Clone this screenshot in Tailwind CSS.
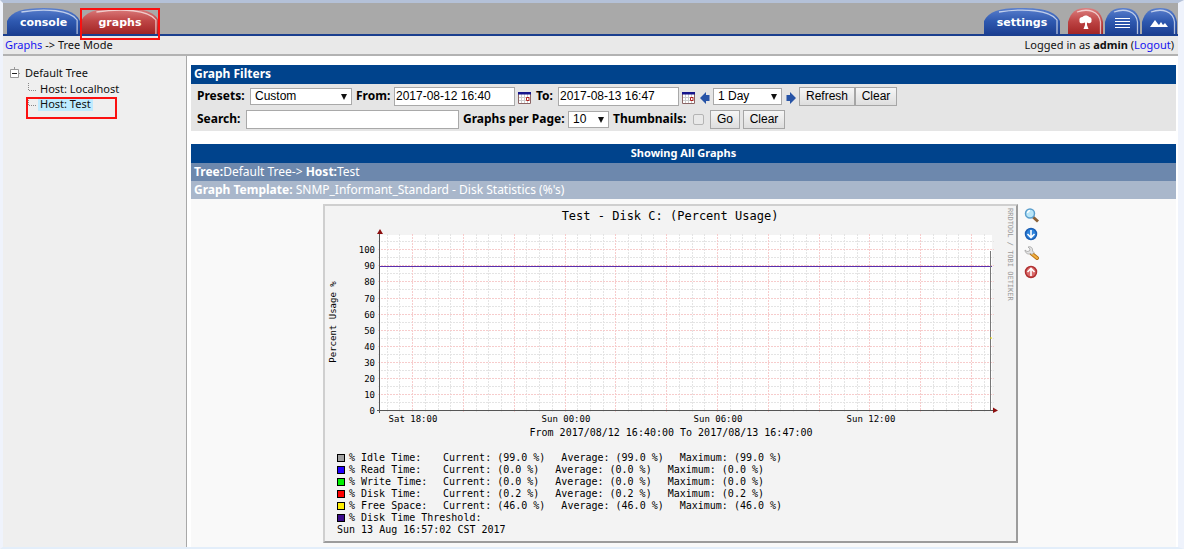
<!DOCTYPE html>
<html lang="en">
<head>
<meta charset="utf-8">
<title>Cacti - Graphs</title>
<script src="https://cdn.jsdelivr.net/npm/@tailwindcss/browser@4"></script>
</head>
<body class="bg-[#eff3fc]">
<svg class="absolute h-0 w-0" aria-hidden="true">
  <symbol id="cal" viewBox="0 0 13 12"><path d="M0 0H13V12H0Z" fill="#fff"/><path d="M3.500 2V11M6.500 2V11M9.500 2V11M1 5.500H12M1 8.500H12" stroke="#ccc"/><path d="M.5 0V11.500H12.500V0" fill="none" stroke="#8a6464"/><path d="M0 0H13V2.500H0Z" fill="#15158c"/><path d="M8.500 5.500H11V8.500H8.500Z" fill="#fff" stroke="#b02020"/></symbol>
  <symbol id="left" viewBox="0 0 10 12"><path d="M0 6L6 0V3H9.500V9H6V12Z" fill="#2653a6"/></symbol>
  <symbol id="down" viewBox="0 0 6 6"><path d="M0 0H6L3 6Z" fill="#111"/></symbol>
  <linearGradient id="blue" x2="0" y2="1"><stop stop-color="#5a7fcd"/><stop offset=".5" stop-color="#2f59b0"/><stop offset="1" stop-color="#1c4093"/></linearGradient>
  <linearGradient id="red" x2="0" y2="1"><stop stop-color="#dd8080"/><stop offset=".5" stop-color="#be4545"/><stop offset="1" stop-color="#a32525"/></linearGradient>
  <symbol id="wide" viewBox="0 0 76 26" preserveAspectRatio="none"><path d="M0 26V13C5 3 17 0 38 0C59 0 71 3 76 13V26Z"/><path d="M15 4C40 0 66 2 73 12V26" fill="none" stroke="#fff" stroke-opacity=".65" stroke-width="1.300"/></symbol>
  <symbol id="small" viewBox="0 0 35 26"><path d="M0 26V14C3 4 8 0 18 0C28 0 33 4 35 14V26Z"/><path d="M9 4C20 0 31 3 32.500 14V26" fill="none" stroke="#fff" stroke-opacity=".65" stroke-width="1.300"/></symbol>
</svg>
<div class="flex min-h-screen flex-col border-t-3 border-r-6 border-b-2 border-l-3 border-t-[#b4c1d8] border-r-[#eff3fc] border-b-[#e3eefa] border-l-[#eff3fc] bg-white font-['Noto_Sans','Open_Sans',sans-serif] text-[11px] leading-4 text-black">
  <header>
    <nav class="flex h-[33px] items-end border-b-2 border-[#1b3f8f] bg-[#a9a9a9] pr-px pl-1 font-['DejaVu_Sans',sans-serif] font-bold text-white">
      <a href="#" class="relative flex h-[26px] w-[73px] items-center justify-center"><svg class="absolute inset-0 h-full w-full" fill="url(#blue)"><use href="#wide"/></svg><span class="relative pt-1">console</span></a>
      <a href="#" class="relative ml-px flex h-[26px] w-[78px] items-center justify-center"><svg class="absolute inset-0 h-full w-full" fill="url(#red)"><use href="#wide"/></svg><span class="relative pt-1">graphs</span><span class="absolute -inset-x-px top-0 -bottom-1.5 border-2 border-[#fb1010]"></span></a>
      <a href="#" class="relative ml-auto flex h-[26px] w-[76px] items-center justify-center"><svg class="absolute inset-0 h-full w-full" fill="url(#blue)"><use href="#wide"/></svg><span class="relative pt-1">settings</span></a>
      <div class="ml-2 flex gap-0.5">
        <a href="#" aria-label="Tree view" class="h-[26px] w-[35px]"><svg class="h-full w-full" viewBox="0 0 35 26"><use href="#small" fill="url(#red)"/><path d="M15.500 21L17 17V14.500C14 16 11 15.500 11.500 12.500C11 10 13 9 14.500 9C16 7 20 7 21 9C23 9 24 11 23.500 12.500C24 15 21 16 19 14.500V17L20.500 21Z" fill="#fff"/></svg></a>
        <a href="#" aria-label="List view" class="h-[26px] w-[35px]"><svg class="h-full w-full" viewBox="0 0 35 26"><use href="#small" fill="url(#blue)"/><path d="M10 10.500H25M10 13.500H25M10 16.500H25M10 19.500H25" stroke="#fff"/></svg></a>
        <a href="#" aria-label="Preview view" class="h-[26px] w-[35px]"><svg class="h-full w-full" viewBox="0 0 35 26"><use href="#small" fill="url(#blue)"/><path d="M8 19L13 12L16 16L17 17L19 14L21 17L23 15L26 19Z" fill="#fff"/></svg></a>
      </div>
    </nav>
    <div class="flex justify-between border-b-2 border-[#b2b2b2] bg-[#e9e9e9] pt-px pr-1 pb-px pl-0.5 text-[#111]">
      <div><a href="#" class="text-[#1515f0]">Graphs</a> -&gt; Tree Mode</div>
      <div>Logged in as <b>admin</b> (<a href="#" class="text-[#1515f0]">Logout</a>)</div>
    </div>
  </header>
  <div class="flex grow">
    <aside class="w-[184px] shrink-0 border-r border-[#a8a8a8] bg-[#efefef] pt-[9px] pl-[7px] text-[#111]">
      <div class="flex items-center gap-[5px]"><svg class="h-3 w-2.5" viewBox="0 0 10 12"><path d="M.5 2.500H8.500V10.500H.5Z" fill="#fff" stroke="#999"/><path d="M2 6.500H7" stroke="#222"/><path d="M4.500 0V2M9 6.500H10" stroke="#999"/></svg><a href="#">Default Tree</a></div>
      <div class="flex items-center gap-1 pl-[18px]"><svg class="h-3 w-2" viewBox="0 0 8 12"><path d="M.5 0V7.500H8" fill="none" stroke="#888" stroke-dasharray="1 1"/></svg><a href="#">Host: Localhost</a></div>
      <div class="relative flex items-center gap-1 pl-[18px]"><svg class="h-3 w-2" viewBox="0 0 8 12"><path d="M.5 0V7.500H8" fill="none" stroke="#888" stroke-dasharray="1 1"/></svg><a href="#" class="-ml-0.5 bg-[#beebff] px-0.5 leading-[14px]">Host: Test</a><span class="absolute top-0 left-4 h-[22px] w-[91px] border-2 border-[#fb1010]"></span></div>
    </aside>
    <main class="min-w-0 grow pt-[9px] pr-0.5 pl-1 text-[12px]">
      <section>
        <h2 class="bg-[#00438c] px-[3px] pt-px pb-0.5 font-bold text-white">Graph Filters</h2>
        <form class="bg-[#e5e5e5] px-1.5 pt-0.5 pb-px">
          <div class="flex h-5 items-center font-['Liberation_Sans',Arial,sans-serif]">
            <label for="preset" class="w-[53px] font-['Noto_Sans',sans-serif] font-bold">Presets:</label>
            <span class="relative w-[102px]"><select id="preset" class="block h-[17px] w-full appearance-none border border-[#a9a9a9] bg-white pl-1 leading-[15px]"><option>Custom</option></select><svg class="absolute top-1.5 right-[5px] h-1.5 w-1.5"><use href="#down"/></svg></span>
            <label for="from" class="ml-1 w-[38px] font-['Noto_Sans',sans-serif] font-bold">From:</label>
            <input id="from" value="2017-08-12 16:40" class="h-[19px] w-[121px] border border-[#a9a9a9] bg-white px-px">
            <button type="button" aria-label="Start date" class="mt-1 ml-[3px]"><svg class="block h-3 w-[13px]"><use href="#cal"/></svg></button>
            <label for="to" class="ml-[5px] w-[22px] font-['Noto_Sans',sans-serif] font-bold">To:</label>
            <input id="to" value="2017-08-13 16:47" class="h-[19px] w-[121px] border border-[#a9a9a9] bg-white px-px">
            <button type="button" aria-label="End date" class="mt-1 ml-[3px]"><svg class="block h-3 w-[13px]"><use href="#cal"/></svg></button>
            <button type="button" aria-label="Shift back" class="mt-1 ml-[5px]"><svg class="block h-3 w-2.5"><use href="#left"/></svg></button>
            <span class="relative ml-[3px] w-[69px]"><select aria-label="Timespan" class="block h-[17px] w-full appearance-none border border-[#a9a9a9] bg-white pl-1 leading-[15px]"><option>1 Day</option></select><svg class="absolute top-1.5 right-[5px] h-1.5 w-1.5"><use href="#down"/></svg></span>
            <button type="button" aria-label="Shift forward" class="mt-1 ml-1 rotate-180"><svg class="block h-3 w-2.5"><use href="#left"/></svg></button>
            <button type="button" class="ml-[3px] h-[19px] w-14 border border-[#a6a6a6] bg-linear-to-b from-[#f6f6f6] to-[#dedede] leading-4">Refresh</button>
            <button type="button" class="h-[19px] w-[42px] border border-[#a6a6a6] bg-linear-to-b from-[#f6f6f6] to-[#dedede] leading-4">Clear</button>
          </div>
          <div class="mt-[3px] mb-px flex h-5 items-center font-['Liberation_Sans',Arial,sans-serif]">
            <label for="search" class="w-[49px] font-['Noto_Sans',sans-serif] font-bold">Search:</label>
            <input id="search" class="h-[19px] w-[213px] border border-[#a9a9a9] bg-white px-px">
            <label for="per" class="ml-1 w-[105px] font-['Noto_Sans',sans-serif] font-bold">Graphs per Page:</label>
            <span class="relative w-[41px]"><select id="per" class="block h-[17px] w-full appearance-none border border-[#a9a9a9] bg-white pl-1 leading-[15px]"><option>10</option></select><svg class="absolute top-1.5 right-[5px] h-1.5 w-1.5"><use href="#down"/></svg></span>
            <label for="thumbs" class="ml-1 w-20 font-['Noto_Sans',sans-serif] font-bold">Thumbnails:</label>
            <input id="thumbs" type="checkbox" class="h-[11px] w-[11px] appearance-none rounded-xs border border-[#b4b4b4] bg-[#e9e9e9]">
            <button type="button" class="ml-1.5 h-[19px] w-[30px] border border-[#a6a6a6] bg-linear-to-b from-[#f6f6f6] to-[#dedede] leading-4">Go</button>
            <button type="button" class="ml-[3px] h-[19px] w-[42px] border border-[#a6a6a6] bg-linear-to-b from-[#f6f6f6] to-[#dedede] leading-4">Clear</button>
          </div>
        </form>
      </section>
      <section class="mt-[13px] bg-[#f9f9f9] text-white">
        <h2 class="bg-[#00438c] pt-px pb-0.5 text-center text-[11px] font-bold leading-4">Showing All Graphs</h2>
        <div class="bg-[#6d88ad] px-[3px] py-px"><b>Tree:</b>Default Tree-&gt; <b>Host:</b>Test</div>
        <div class="bg-[#a9b7cb] px-[3px] py-px"><b>Graph Template:</b> SNMP_Informant_Standard - Disk Statistics (%'s)</div>
        <div class="flex justify-center gap-1.5 pt-[5px] pr-1 pb-1">
          <figure class="w-[695px] border-2 border-t-[#cfcfcf] border-r-[#9c9c9c] border-b-[#9c9c9c] border-l-[#cfcfcf] bg-[#f3f3f3] pb-[5px] font-['DejaVu_Sans_Mono',monospace] text-[10px] leading-3 text-black">
            <svg class="block h-[244px] w-[691px]" viewBox="325 206 691 244">
              <text x="670" y="220" font-size="12" text-anchor="middle">Test - Disk C: (Percent Usage)</text>
              <path d="M380 235H992V410H380Z" fill="#fff"/>
              <g id="grid" stroke-width="1" stroke-dasharray="2 1" fill="none" shape-rendering="crispEdges"></g>
              <path d="M380 266.500H992" stroke="#5a2fae"/>
              <path d="M379.500 232V413M377 410.500H997" stroke="#555"/>
              <path d="M990.500 251V410" stroke="#777"/><path d="M990 338H992" stroke="#f0e000"/>
              <path d="M377 234L380 229L383 234ZM993 407.500L998 410.500L993 413Z" fill="#8c0f0f"/>
              <g id="labels" font-size="9" text-anchor="end"></g>
              <g font-size="9" text-anchor="middle"><text x="413" y="422">Sat 18:00</text><text x="566" y="422">Sun 00:00</text><text x="718" y="422">Sun 06:00</text><text x="871" y="422">Sun 12:00</text><text transform="translate(336 322) rotate(-90)">Percent Usage %</text></g>
              <text x="671" y="436" font-size="10" text-anchor="middle">From 2017/08/12 16:40:00 To 2017/08/13 16:47:00</text>
              <text transform="translate(1008 208) rotate(90)" font-size="7" fill="#999">RRDTOOL / TOBI OETIKER</text>
            </svg>
            <figcaption id="legend" class="pt-0.5 pl-3"></figcaption>
          </figure>
          <div class="flex flex-col gap-1 pt-1">
            <a href="#" aria-label="Zoom graph"><svg class="block h-[15px] w-4" viewBox="0 0 16 15"><path d="M9 9L14 13.500" stroke="#8c6136" stroke-width="3"/><circle cx="6" cy="5.500" r="4.500" fill="#b9e6f8" stroke="#5b9fcd" stroke-width="1.500"/><path d="M3.500 5A3 3 0 0 1 6 2.500" stroke="#fff" stroke-width="1.500" fill="none"/></svg></a>
            <a href="#" aria-label="CSV export"><svg class="block h-[15px] w-4" viewBox="0 0 16 15"><circle cx="7" cy="7" r="5.500" fill="#2d83dc" stroke="#1c5fb4" stroke-width="1.500"/><path d="M7 3V10.500M3.500 7L7 10.500L10.500 7" stroke="#fff" stroke-width="1.600" fill="none"/></svg></a>
            <a href="#" aria-label="Graph properties"><svg class="block h-[15px] w-4" viewBox="0 0 16 15"><path d="M7.500 7.500L13 12" stroke="#b87318" stroke-width="4" stroke-linecap="round"/><path d="M7.500 7.500L13 12" stroke="#f2b040" stroke-width="2" stroke-linecap="round"/><path d="M4 1L6 3L5.500 5L3 5.500L1 4C1 7 4 9 6.500 7.500L8 8.500L10 6.500L8.500 5C9 2 7 0 4 1Z" fill="#e4e4e4" stroke="#999" stroke-width=".7"/></svg></a>
            <a href="#" aria-label="Page top"><svg class="block h-[15px] w-4" viewBox="0 0 16 15"><circle cx="7" cy="7" r="5.500" fill="#d86a6a" stroke="#b03030" stroke-width="1.500"/><path d="M7 11V3.500M3.500 7L7 3.500L10.500 7" stroke="#fff" stroke-width="1.600" fill="none"/></svg></a>
          </div>
        </div>
      </section>
    </main>
  </div>
</div>
<script>
  let grid = '', labels = '';
  const minor = '#e4e4e4', major = '#f7cccc';
  for (let pass = 0; pass < 2; pass++) {
    for (let k = -2; k <= 45; k++) {
      const x = Math.floor(412.6 + 12.7 * k) + 0.5, m = k % 4 === 0;
      if (m === !!pass) grid += `<path d="M${x} 234V412" stroke="${m ? major : minor}"/>`;
    }
    for (let v = 0; v <= 105; v += 5) {
      const y = Math.floor(410.5 - v * 1.607) + 0.5, m = v % 10 === 0;
      if (m !== !!pass) continue;
      grid += `<path d="M378 ${y}H994" stroke="${m ? major : minor}"/>`;
      if (m) labels += `<text x="375" y="${y + 3}">${v}</text>`;
    }
  }
  document.getElementById('grid').innerHTML = grid;
  document.getElementById('labels').innerHTML = labels;
  const rows = [['#a0a0a0', 'Idle Time:', '99.0'], ['#2000ff', 'Read Time:', '0.0'], ['#00f000', 'Write Time:', '0.0'], ['#ff0000', 'Disk Time:', '0.2'], ['#ffee00', 'Free Space:', '46.0'], ['#3c0c8c', 'Disk Time Threshold:', '']];
  document.getElementById('legend').innerHTML = rows.map(([c, n, v]) =>
    `<div class="flex items-center whitespace-nowrap"><i class="mr-1 h-2 w-2 border border-black" style="background:${c}"></i><span class="w-[94px]">% ${n}</span>` +
    (v ? `<span class="flex gap-4">${['Current', 'Average', 'Maximum'].map(t => `<span>${t}: (${v} %)</span>`).join('')}</span>` : '') + '</div>').join('') +
    '<div>Sun 13 Aug 16:57:02 CST 2017</div>';
</script>
</body>
</html>
